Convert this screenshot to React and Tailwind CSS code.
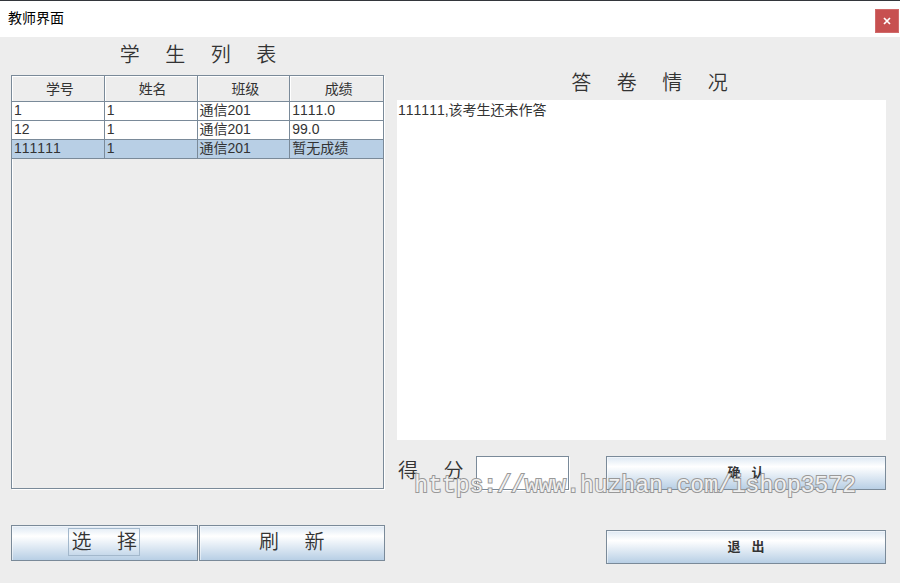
import React from "react";

const SPACE = "\u3000";
const NBSP = "\u00a0";

const students = [
  { id: "1", name: "1", klass: "通信201", score: "1111.0" },
  { id: "12", name: "1", klass: "通信201", score: "99.0" },
  { id: "111111", name: "1", klass: "通信201", score: "暂无成绩", selected: true },
];

const columns = ["学号", "姓名", "班级", "成绩"];

const wide = (text) => text.split("").join(SPACE + NBSP);
const spaced = (text) => text.split("").join(NBSP + NBSP + NBSP);

function MetalButton({ className, children }) {
  return (
    <button
      type="button"
      className={`flex items-center justify-center border border-[#7a8a99] bg-linear-to-b from-[#dde8f3] via-white via-30% to-[#b8cfe5] text-[#333] shadow-[inset_1px_1px_0_#ffffff80] ${className}`}
    >
      {children}
    </button>
  );
}

function StudentTable() {
  return (
    <div className="mr-px flex-1 border border-[#7a8a99] shadow-[1px_1px_0_#fff,inset_1px_1px_0_#fff]">
      <table className="w-full table-fixed border-separate border-spacing-0 text-left text-sm text-[#333]">
        <thead>
          <tr>
            {columns.map((c) => (
              <th
                key={c}
                className="h-[26px] border-r border-b border-[#7a8a99] p-0 pl-1 text-center leading-[24px] font-normal shadow-[inset_1px_1px_0_#fff] last:border-r-0"
              >
                {c}
              </th>
            ))}
          </tr>
        </thead>
        <tbody>
          {students.map((s) => (
            <tr key={s.id} className={s.selected ? "bg-[#b8cfe5]" : "bg-white"}>
              {[s.id, s.name, s.klass, s.score].map((v, i) => (
                <td
                  key={i}
                  className="h-[19px] border-r border-b border-[#7a8a99] p-0 pb-0.5 pl-0.5 leading-[16px] last:border-r-0"
                >
                  {v}
                </td>
              ))}
            </tr>
          ))}
        </tbody>
      </table>
    </div>
  );
}

export default function App() {
  return (
    <div className="relative flex min-h-screen flex-col border-t border-[#33363b] bg-[#ededed] font-['Liberation_Sans','Noto_Sans_CJK_SC',sans-serif] [font-kerning:none]">
      <header className="flex h-9 items-center justify-between bg-white pr-px pl-2">
        <h1 className="pb-0.5 text-sm text-black">教师界面</h1>
        <button
          type="button"
          aria-label="关闭"
          className="mt-1 flex size-6 items-center justify-center border border-[#d06a6a] bg-[#c75050] text-white"
        >
          <svg viewBox="0 0 8 8" className="size-2" fill="none" stroke="currentColor" strokeWidth="1.7">
            <path d="M1 1l6 6M7 1L1 7" />
          </svg>
        </button>
      </header>

      <main className="flex flex-1 gap-3 pr-3.5 pl-[11px]">
        <section className="flex flex-[374] flex-col pb-[22px]">
          <h2 className="h-[38px] text-center text-[20px] leading-[36px] font-[350] text-[#333]">
            {wide("学生列表")}
          </h2>
          <StudentTable />
          <div className="mt-9 grid grid-cols-2 gap-px">
            <MetalButton className="h-9 pb-0.5 text-[20px] font-[350]">
              <span className="border border-[#a3b8cc] px-0.5 leading-[26px]">{wide("选择")}</span>
            </MetalButton>
            <MetalButton className="h-9 pb-0.5 text-[20px] font-[350]">
              <span className="leading-[26px]">{wide("刷新")}</span>
            </MetalButton>
          </div>
        </section>

        <section className="flex flex-[489] flex-col pb-[19px]">
          <h2 className="h-[63px] pt-7 pl-4 text-center text-[20px] leading-[36px] font-[350] text-[#333]">
            <label htmlFor="answers">{wide("答卷情况")}</label>
          </h2>
          <textarea
            id="answers"
            readOnly
            defaultValue="111111,该考生还未作答"
            className="block w-full flex-1 resize-none bg-white px-px py-px text-sm leading-[18px] text-[#333] outline-none"
          />
          <div className="mt-4 flex h-[34px] items-center">
            <label htmlFor="score" className="w-[79px] pb-1 pl-px text-[20px] leading-[30px] font-[350] text-[#333]">
              {wide("得分")}
            </label>
            <input
              id="score"
              type="text"
              className="h-full w-[93px] border border-[#7a8a99] bg-white px-1 text-sm shadow-[1px_1px_0_#fff] outline-none"
            />
            <MetalButton className="ml-[37px] h-full flex-1 text-[13px] font-bold">{spaced("确认")}</MetalButton>
          </div>
          <div className="mt-10 flex pl-[209px]">
            <MetalButton className="h-[34px] flex-1 text-[13px] font-bold">{spaced("退出")}</MetalButton>
          </div>
        </section>
      </main>

      <div className="pointer-events-none absolute right-11 bottom-[82px] font-['Liberation_Mono',monospace] text-[23px] leading-[30px] text-[#f0f0f0] [paint-order:stroke_fill] [-webkit-text-stroke:2px_#999999]">
        https://www.huzhan.com/ishop3572
      </div>
    </div>
  );
}
